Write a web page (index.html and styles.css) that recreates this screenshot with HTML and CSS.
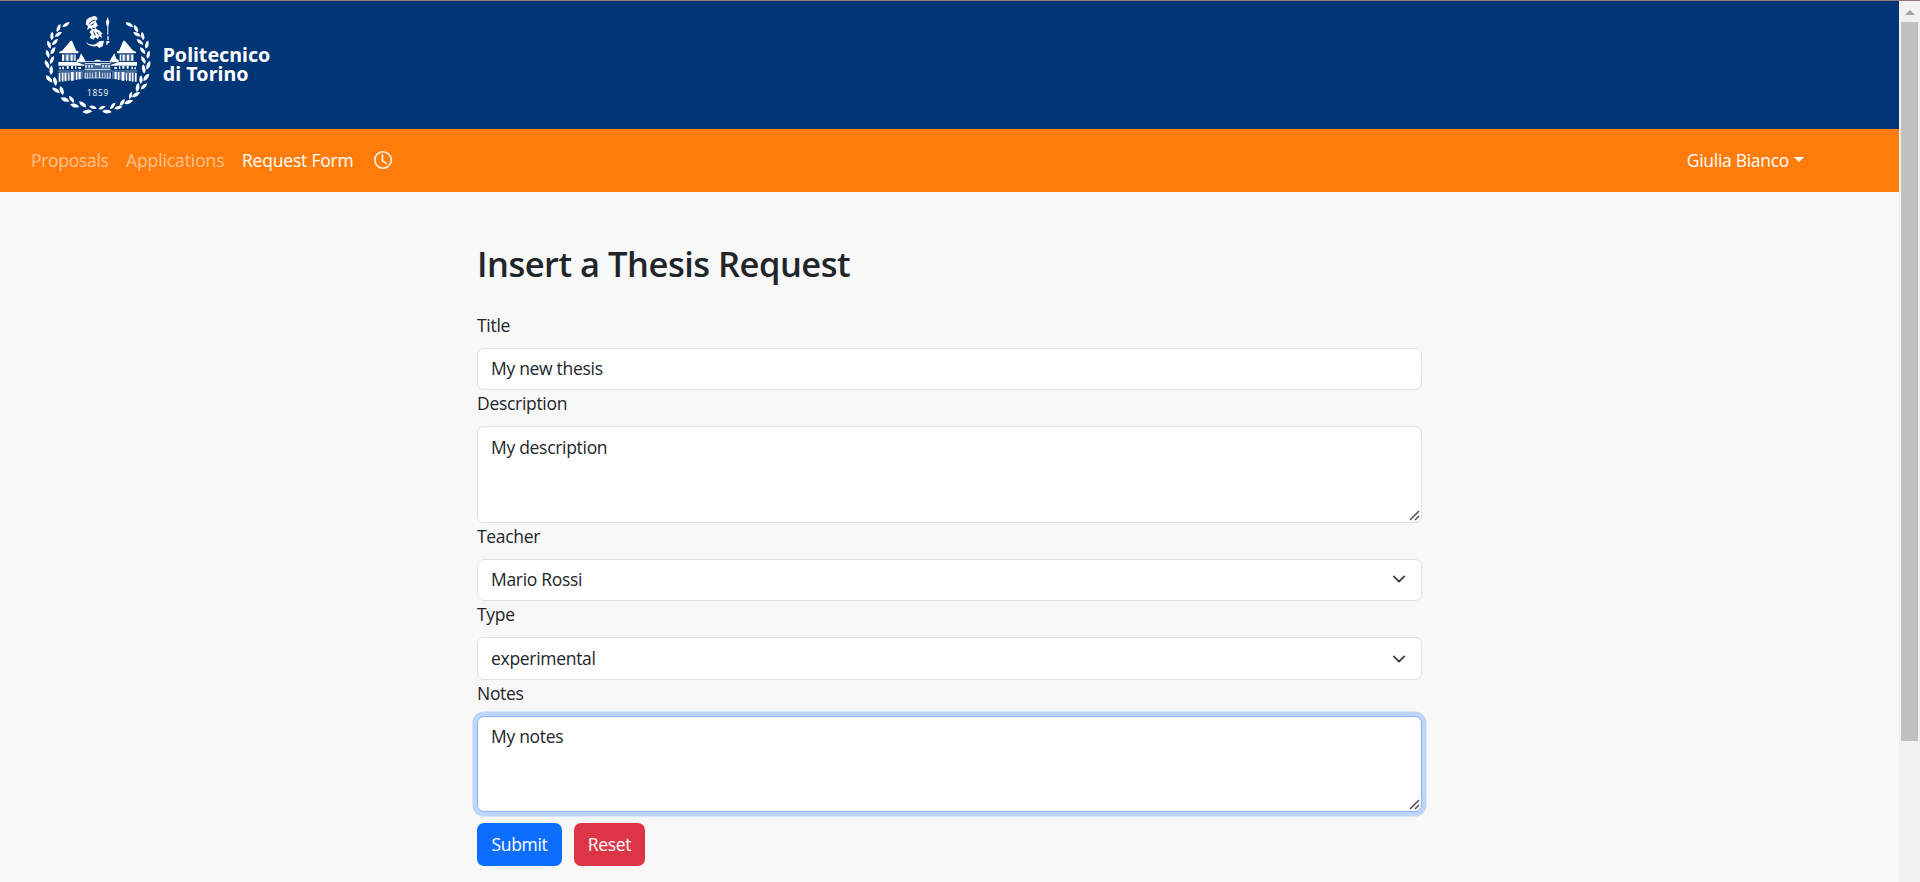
FILE: index.html
```html
<!DOCTYPE html>
<html lang="en">
<head>
<meta charset="utf-8">
<title>Insert a Thesis Request</title>
<link rel="stylesheet" href="styles.css">
</head>
<body>
<div class="window">
<div class="page">
  <header class="banner">
    <svg class="logo" width="250" height="128" viewBox="0 3 750 384" fill="#fff">
      <defs>
        <path id="leaf" d="M-13 0Q-5-7 5-5Q10-3 13 0Q6 5-3 5Q-9 4-13 0Z"/>
        <g id="tower">
          <path d="M122 122h4l13 31h6v7H88v-5l8-3 3-3z"/>
          <path d="M96 164h6v18h-6zM109 164h6v18h-6zM122 164h6v18h-6zM133 164h4v18h-4z"/>
          <path d="M153 160l11 18 3 9h-27v-7l7-4z"/>
          <path d="M85 186h54l24 8v3H85z"/>
          <path d="M88 202h5v6h-5zM97 200h5v8h-5zM110 198h6v8h-6zM123 198h6v8h-6zM135 199h4v8h-4zM145 201h8v6h-8z"/>
          <path d="M84 212h79v2H84zM86 218h5v27h-5zM96 218h4v27h-4zM104 218h5v26h-5zM115 218h3v25h-3zM123 216h8v26h-8zM138 216h4v24h-4zM146 216h6v22h-6z"/>
          <path opacity=".3" d="M92 216h68v20l-68 8zM96 162h40v22H96z"/>
        </g>
      </defs>
      <g>
        <use href="#leaf" transform="translate(108 74) rotate(-30)"/>
        <use href="#leaf" transform="translate(86 84) rotate(-65)"/>
        <use href="#leaf" transform="translate(85 103) rotate(-32)"/>
        <use href="#leaf" transform="translate(66 108) rotate(-82)"/>
        <use href="#leaf" transform="translate(75 126) rotate(-42)"/>
        <use href="#leaf" transform="translate(57 134) rotate(72)"/>
        <use href="#leaf" transform="translate(69 152) rotate(-55)"/>
        <use href="#leaf" transform="translate(53 162) rotate(75)"/>
        <use href="#leaf" transform="translate(66 180) rotate(-65)"/>
        <use href="#leaf" transform="translate(51 193) rotate(67) scale(1.1)"/>
        <use href="#leaf" transform="translate(64 211) rotate(-85) scale(1.1)"/>
        <use href="#leaf" transform="translate(57 237) rotate(50) scale(1.15)"/>
        <use href="#leaf" transform="translate(75 244) rotate(80) scale(1.1)"/>
        <use href="#leaf" transform="translate(78 271) rotate(38) scale(1.1)"/>
        <use href="#leaf" transform="translate(95 272) rotate(75) scale(1.1)"/>
        <use href="#leaf" transform="translate(105 299) rotate(24) scale(1.1)"/>
        <use href="#leaf" transform="translate(125 298) rotate(55)"/>
        <use href="#leaf" transform="translate(134 317) rotate(16) scale(1.1)"/>
        <use href="#leaf" transform="translate(158 313) rotate(42) scale(1.1)"/>
        <use href="#leaf" transform="translate(172 335) rotate(-5) scale(1.15)"/>
        <use href="#leaf" transform="translate(189 322) rotate(20) scale(.9)"/>
      </g>
      <g>
        <use href="#leaf" transform="translate(298 74) rotate(30)"/>
        <use href="#leaf" transform="translate(318 86) rotate(65)"/>
        <use href="#leaf" transform="translate(321 103) rotate(32)"/>
        <use href="#leaf" transform="translate(338 108) rotate(82)"/>
        <use href="#leaf" transform="translate(330 126) rotate(42)"/>
        <use href="#leaf" transform="translate(351 134) rotate(-72)"/>
        <use href="#leaf" transform="translate(338 152) rotate(55)"/>
        <use href="#leaf" transform="translate(355 164) rotate(-75)"/>
        <use href="#leaf" transform="translate(340 180) rotate(65)"/>
        <use href="#leaf" transform="translate(355 196) rotate(-67) scale(1.1)"/>
        <use href="#leaf" transform="translate(341 207) rotate(85) scale(1.1)"/>
        <use href="#leaf" transform="translate(349 232) rotate(-50) scale(1.1)"/>
        <use href="#leaf" transform="translate(333 239) rotate(-85)"/>
        <use href="#leaf" transform="translate(342 259) rotate(-40)"/>
        <use href="#leaf" transform="translate(323 262) rotate(-80) scale(1.1)"/>
        <use href="#leaf" transform="translate(318 284) rotate(-30) scale(1.1)"/>
        <use href="#leaf" transform="translate(302 286) rotate(-70) scale(.9)"/>
        <use href="#leaf" transform="translate(296 306) rotate(-18) scale(1.1)"/>
        <use href="#leaf" transform="translate(277 308) rotate(-52)"/>
        <use href="#leaf" transform="translate(265 323) rotate(-12)"/>
        <use href="#leaf" transform="translate(248 318) rotate(-50)"/>
        <use href="#leaf" transform="translate(231 335) rotate(8) scale(1.1)"/>
        <use href="#leaf" transform="translate(216 323) rotate(-20) scale(.9)"/>
      </g>
      <path d="M167 73Q167 54 184 51Q199 43 203 57L197 63L204 78L197 81L199 87Q210 91 218 101L213 104L217 114L207 108L204 118L196 112L190 119L179 114L184 103L178 96L186 89L179 84L171 91L174 79Z"/>
      <path d="M176 72l10-9 10-3M182 76l10-5M186 84l10 3M190 94l6 13M200 96l6 8" fill="none" stroke="#003576" stroke-width="3"/>
      <path d="M167 126Q180 137 196 133L208 124L222 122L218 139L207 144L202 138Q179 143 167 126Z"/>
      <path d="M233 51l5 14-3 13h-5l-2-13zM232 77h3v27h-3zM232 109h4v11h-4zM229 123h9v6h-5v5h-4z"/>
      <use href="#tower"/>
      <use href="#tower" transform="matrix(-1 0 0 1 406 0)"/>
      <path d="M164 183h29l5-4h10l5 4h30v2h-79zM164 190h78v2h-78zM164 207h78v2h-78zM166 195h4v8h-4zM175 195h4v8h-4zM184 195h4v8h-4zM195 190h17v6h-17zM217 195h4v8h-4zM226 195h4v8h-4zM235 195h4v8h-4z"/>
      <path d="M164 218h3v18h-3zM172 218h2v18h-2zM179 218h2v17h-2zM187 218h2v17h-2zM196 215h3v19h-3zM207 215h3v19h-3zM216 218h2v17h-2zM224 218h2v17h-2zM231 218h2v18h-2zM239 218h3v18h-3zM164 233h78v2h-78z"/>
      <path opacity=".25" d="M164 190h78v45h-78z"/>
      <text class="logo-year" x="171" y="287" textLength="64">1859</text>
      <text class="logo-name" x="398" y="185" textLength="323">Politecnico</text>
      <text class="logo-name" x="398" y="244" textLength="258">di Torino</text>
    </svg>
  </header>
  <nav class="navbar">
    <a class="nav-link proposals">Proposals</a>
    <a class="nav-link applications">Applications</a>
    <a class="nav-link active">Request Form</a>
    <svg class="clock" width="18" height="18" viewBox="0 0 16 16" fill="#fff" stroke="#fff" stroke-width=".4"><path d="M8 3.5a.5.5 0 0 0-1 0V9a.5.5 0 0 0 .252.434l3.5 2a.5.5 0 0 0 .496-.868L8 8.71z"/><path d="M8 15.8A7.8 7.8 0 1 0 8 .2a7.8 7.8 0 0 0 0 15.6m6.8-7.8A6.8 6.8 0 1 1 1.2 8a6.8 6.8 0 0 1 13.6 0"/></svg>
    <a class="user">Giulia Bianco<span class="caret"></span></a>
  </nav>
  <main class="content">
    <h2 class="heading">Insert a Thesis Request</h2>
    <form class="form">
      <label class="label" for="title">Title</label>
      <input class="control" id="title" type="text" value="My new thesis">
      <label class="label" for="description">Description</label>
      <div class="area-wrap">
        <textarea class="control area" id="description">My description</textarea>
        <svg class="grip" width="11" height="11" viewBox="0 0 11 11"><path d="M1 10 10 1M6 10l4-4" stroke="#555" stroke-width="1.6"/></svg>
      </div>
      <label class="label" for="teacher">Teacher</label>
      <div class="control select" id="teacher"><span>Mario Rossi</span>
        <svg width="18" height="14" viewBox="0 0 16 16"><path fill="none" stroke="#343a40" stroke-linecap="round" stroke-linejoin="round" stroke-width="2" d="m2 5 6 6 6-6"/></svg></div>
      <label class="label" for="type">Type</label>
      <div class="control select type" id="type"><span class="wide">experimental</span>
        <svg width="18" height="14" viewBox="0 0 16 16"><path fill="none" stroke="#343a40" stroke-linecap="round" stroke-linejoin="round" stroke-width="2" d="m2 5 6 6 6-6"/></svg></div>
      <label class="label" for="notes">Notes</label>
      <div class="area-wrap">
        <textarea class="control area focused" id="notes">My notes</textarea>
        <svg class="grip" width="11" height="11" viewBox="0 0 11 11"><path d="M1 10 10 1M6 10l4-4" stroke="#555" stroke-width="1.6"/></svg>
      </div>
      <div class="actions">
        <button class="btn submit" type="button">Submit</button>
        <button class="btn reset" type="button">Reset</button>
      </div>
    </form>
  </main>
</div>
<div class="scrollbar"><span class="arrow"></span><span class="thumb"></span></div>
</div>
</body>
</html>
```
FILE: styles.css
```css
* { box-sizing: border-box; }
body {
  margin: 0;
  overflow: hidden;
  background: #f8f8f8;
  color: #212529;
  font-family: "Open Sans", "Noto Sans", sans-serif;
  font-size: 17.5px;
  line-height: 27px;
  letter-spacing: -0.3px;
}
.window { display: flex; height: 882px; border-top: 1px solid #917b7c; }
.page { flex: 1; }
.banner { height: 128px; padding-left: 30px; background: #003576; }
.logo { display: block; }
.logo-year { font: 400 25px "Open Sans", sans-serif; letter-spacing: 0; }
.logo-name { font: 700 59px "Noto Sans", sans-serif; letter-spacing: 0; }
.navbar {
  display: flex;
  align-items: center;
  height: 63px;
  padding: 0 95px 0 31px;
  background: #ff7c0a;
  color: #fff;
}
.nav-link { color: rgba(255, 255, 255, 0.55); white-space: nowrap; }
.proposals { width: 95px; }
.applications { width: 116px; letter-spacing: -0.1px; }
.nav-link.active { width: 132px; color: #fff; letter-spacing: -0.2px; }
.clock { margin-top: -2px; }
.user { display: flex; align-items: center; margin-left: auto; }
.caret {
  margin: -3px 0 0 5px;
  border: 5px solid transparent;
  border-top-color: #fff;
  border-bottom: 0;
}
.content { width: 945px; margin: 0 auto; padding-top: 48px; }
.heading { margin: 0; height: 72px; font-size: 34.5px; font-weight: 600; line-height: 47px; letter-spacing: -0.5px; }
.form { display: flex; flex-direction: column; }
.label { height: 27px; margin-bottom: 9px; }
.control {
  display: block;
  width: 100%;
  height: 42px;
  padding: 5px 13px 7px;
  border: 1px solid #dee2e6;
  border-radius: 7px;
  outline: 0;
  background: #fff;
  color: #212529;
  font: inherit;
  letter-spacing: inherit;
}
.area-wrap { position: relative; }
.area { height: 97px; padding-top: 7px; resize: none; }
.area.focused { height: 96px; padding-top: 6px; border-color: #86b7fe; box-shadow: 0 0 0 4.5px rgba(13, 110, 253, 0.25); }
.grip { position: absolute; right: 2px; bottom: 2px; }
.select { display: flex; align-items: center; justify-content: space-between; }
.select.type { height: 43px; padding-top: 6px; padding-bottom: 6px; }
.actions { display: flex; gap: 12px; margin-top: 11px; }
.btn {
  height: 43px;
  padding: 0;
  border: 0;
  border-radius: 7px;
  color: #fff;
  font: inherit;
  letter-spacing: inherit;
}
.submit { width: 85px; background: #0d6efd; }
.reset { width: 71px; background: #dc3545; }
.scrollbar { display: flex; flex-direction: column; align-items: center; width: 21px; background: #f1f1f1; }
.arrow { margin: 9px 0 7px; border: 5px solid transparent; border-top: 0; border-bottom-color: #a3a3a3; }
.thumb { width: 17px; height: 719px; background: #c1c1c1; }
```
